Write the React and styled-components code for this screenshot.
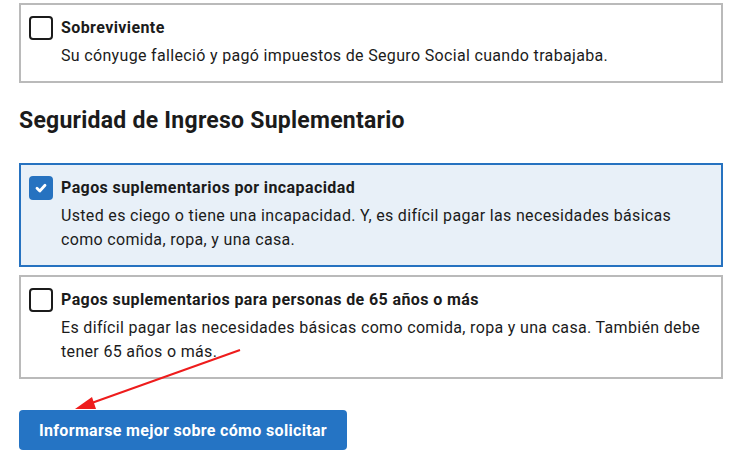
import React from "react"
import styled, { createGlobalStyle } from "styled-components"

const GlobalStyle = createGlobalStyle`
  html, body {
    margin: 0;
    padding: 0;
    background: #ffffff;
  }
  body {
    font-family: Roboto, "Liberation Sans", sans-serif;
    color: #1b1b1b;
  }
`

const options = [
  {
    id: "sobreviviente",
    title: "Sobreviviente",
    text: "Su cónyuge falleció y pagó impuestos de Seguro Social cuando trabajaba.",
    checked: false,
  },
]

const ssiOptions = [
  {
    id: "incapacidad",
    title: "Pagos suplementarios por incapacidad",
    text: "Usted es ciego o tiene una incapacidad. Y, es difícil pagar las necesidades básicas como comida, ropa, y una casa.",
    checked: true,
  },
  {
    id: "mayores",
    title: "Pagos suplementarios para personas de 65 años o más",
    text: "Es difícil pagar las necesidades básicas como comida, ropa y una casa. También debe tener 65 años o más.",
    checked: false,
  },
]

const CheckIcon = () => (
  <svg width="14" height="14" viewBox="0 0 14 14">
    <path d="M3 7.3 L5.8 10 L11 4.2" fill="none" stroke="#ffffff" strokeWidth="2.8" strokeLinecap="round" strokeLinejoin="round" />
  </svg>
)

const OptionCard = ({ title, text, checked }) => (
  <Card $checked={checked}>
    <Box $checked={checked}>{checked && <CheckIcon />}</Box>
    <Body>
      <Title>{title}</Title>
      <Desc>{text}</Desc>
    </Body>
  </Card>
)

const App = () => {
  return (
    <>
      <GlobalStyle />
      <Page>
        <List>
          {options.map((o) => (
            <OptionCard key={o.id} {...o} />
          ))}
        </List>
        <Heading>Seguridad de Ingreso Suplementario</Heading>
        <List>
          {ssiOptions.map((o) => (
            <OptionCard key={o.id} {...o} />
          ))}
        </List>
        <Button>Informarse mejor sobre cómo solicitar</Button>
        <Arrow width="733" height="464" viewBox="0 0 733 464">
          <line x1="240" y1="350" x2="86" y2="405" stroke="#ee1c1c" strokeWidth="2" />
          <polygon points="75,409 92,397 96,409" fill="#ee1c1c" />
        </Arrow>
      </Page>
    </>
  )
}

const Page = styled.div`
  position: relative;
  width: 733px;
  height: 464px;
  padding: 3px 10px 0 19px;
  box-sizing: border-box;
  overflow: hidden;
  letter-spacing: 0.33px;
`

const List = styled.div`
  display: flex;
  flex-direction: column;
  gap: 8px;
`

const Card = styled.div`
  display: flex;
  gap: 8px;
  padding: 11px 12px 13px 8px;
  border: 2px solid ${(p) => (p.$checked ? "#2672c0" : "#bababa")};
  background: ${(p) => (p.$checked ? "#e8f0f8" : "#ffffff")};
`

const Box = styled.div`
  flex: none;
  width: 24px;
  height: 24px;
  box-sizing: border-box;
  border-radius: 4px;
  border: ${(p) => (p.$checked ? "none" : "2px solid #1b1b1b")};
  background: ${(p) => (p.$checked ? "#2672c0" : "#ffffff")};
  display: flex;
  align-items: center;
  justify-content: center;
`

const Body = styled.div`
  display: flex;
  flex-direction: column;
  gap: 4px;
`

const Title = styled.div`
  font-size: 16px;
  font-weight: 700;
  line-height: 24px;
  letter-spacing: 0.4px;
`

const Desc = styled.div`
  font-size: 16px;
  line-height: 24px;
  color: #1b1b1b;
`

const Heading = styled.h2`
  margin: 24px 0 28px;
  font-size: 23px;
  line-height: 28px;
  font-weight: 700;
  letter-spacing: 0.25px;
`

const Button = styled.button`
  margin-top: 31px;
  height: 40px;
  padding: 0 20px;
  border: none;
  border-radius: 4px;
  background: #2574c4;
  color: #ffffff;
  font-family: Roboto, "Liberation Sans", sans-serif;
  font-size: 16px;
  font-weight: 700;
  letter-spacing: 0.33px;
  cursor: pointer;
`

const Arrow = styled.svg`
  position: absolute;
  left: 0;
  top: 0;
  pointer-events: none;
`

export default App
